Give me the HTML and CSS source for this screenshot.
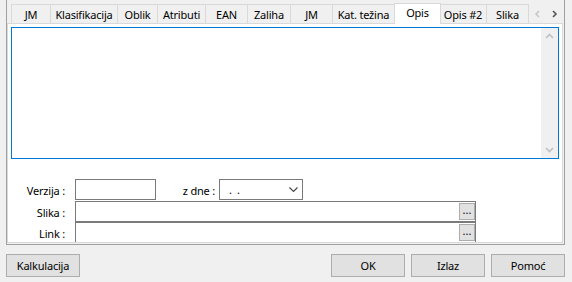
FILE: index.html
```html
<!DOCTYPE html>
<html lang="hr">
<head>
    <meta charset="UTF-8">
    <title>Artikal - Opis</title>
    <link rel="stylesheet" href="styles.css">
</head>
<body>
    <div class="frame">
        <div class="tabbar">
            <div class="tab">JM</div>
            <div class="tab">Klasifikacija</div>
            <div class="tab">Oblik</div>
            <div class="tab">Atributi</div>
            <div class="tab">EAN</div>
            <div class="tab">Zaliha</div>
            <div class="tab">JM</div>
            <div class="tab">Kat. težina</div>
            <div class="tab active">Opis</div>
            <div class="tab">Opis #2</div>
            <div class="tab">Slika</div>
            <svg class="tab-arrows" width="33" height="24" viewBox="0 0 33 24">
                <polyline points="9,11 6,14 9,17" fill="none" stroke="#c6c6c6" stroke-width="1.6"/>
                <polyline points="23,11 26,14 23,17" fill="none" stroke="#555" stroke-width="1.6"/>
            </svg>
        </div>

        <div class="pane">
            <div class="memo">
                <div class="memo-body"></div>
                <div class="vscroll">
                    <svg width="17" height="17" viewBox="0 0 17 17">
                        <polyline points="5,10 8.5,6.5 12,10" fill="none" stroke="#c0c0c0" stroke-width="1.6"/>
                    </svg>
                    <svg width="17" height="17" viewBox="0 0 17 17">
                        <polyline points="5,7 8.5,10.5 12,7" fill="none" stroke="#c0c0c0" stroke-width="1.6"/>
                    </svg>
                </div>
            </div>

            <div class="fields">
                <div class="row">
                    <div class="label">Verzija :</div>
                    <div class="input short"></div>
                    <div class="label label-date">z dne :</div>
                    <div class="combo">
                        <span class="date">.&nbsp;&nbsp;.</span>
                        <svg width="9" height="6" viewBox="0 0 9 6">
                            <polyline points="0.5,0.5 4.5,4.5 8.5,0.5" fill="none" stroke="#444" stroke-width="1.1"/>
                        </svg>
                    </div>
                </div>
                <div class="row row-gap">
                    <div class="label">Slika :</div>
                    <div class="input long">
                        <div class="ellipsis">...</div>
                    </div>
                </div>
                <div class="row">
                    <div class="label">Link :</div>
                    <div class="input long">
                        <div class="ellipsis">...</div>
                    </div>
                </div>
            </div>
        </div>
    </div>

    <div class="buttons">
        <div class="btn">Kalkulacija</div>
        <div class="btn-group">
            <div class="btn">OK</div>
            <div class="btn">Izlaz</div>
            <div class="btn">Pomoć</div>
        </div>
    </div>
</body>
</html>
```

FILE: styles.css
```css
* {
    box-sizing: border-box;
}
body {
    margin: 0;
    width: 572px;
    height: 282px;
    overflow: hidden;
    background-color: #f0f0f0;
    font-family: "Noto Sans", "Segoe UI", sans-serif;
    font-size: 11px;
    letter-spacing: -0.2px;
    color: #000;
}
.frame {
    margin-left: 6px;
    width: 559px;
    height: 245px;
    border: 1px solid #a0a0a0;
    border-top: 0;
    padding: 0 1px 1px 0;
    display: flex;
    flex-direction: column;
}

/* tabs */
.tabbar {
    height: 24px;
    margin-bottom: -1px;
    padding-left: 4px;
    display: flex;
    align-items: flex-end;
}
.tab {
    height: 19px;
    margin-bottom: 1px;
    border-top: 1px solid #d9d9d9;
    border-right: 1px solid #d9d9d9;
    background-color: #f0f0f0;
    text-align: center;
    line-height: 19px;
    white-space: nowrap;
}
.tab:first-child {
    border-left: 1px solid #d9d9d9;
}
.tab:nth-child(1) { width: 40px; }
.tab:nth-child(2) { width: 67px; }
.tab:nth-child(3) { width: 40px; }
.tab:nth-child(4) { width: 48px; }
.tab:nth-child(5) { width: 42px; }
.tab:nth-child(6) { width: 43px; }
.tab:nth-child(7) { width: 42px; }
.tab:nth-child(8) { width: 62px; }
.tab:nth-child(10) { width: 47px; }
.tab:nth-child(11) { width: 42px; }
.tab.active {
    position: relative;
    width: 47px;
    height: 21px;
    margin: 0 -1px 0 -1px;
    border-left: 1px solid #d9d9d9;
    background-color: #fff;
    line-height: 17px;
}
.tab-arrows {
    margin-left: auto;
    align-self: flex-start;
}

/* page */
.pane {
    flex: 1;
    border: 1px solid #d9d9d9;
    background-color: #fff;
    overflow: hidden;
}
.memo {
    height: 132px;
    margin: 3px 3px 0 3px;
    border: 1px solid #0078d7;
    display: flex;
}
.memo-body {
    flex: 1;
}
.vscroll {
    width: 17px;
    background-color: #f0f0f0;
    display: flex;
    flex-direction: column;
    justify-content: space-between;
}
.vscroll svg {
    display: block;
}

.fields {
    margin-top: 20px;
}
.row {
    display: flex;
    align-items: center;
    height: 21px;
}
.row-gap {
    margin-top: 1px;
}
.label {
    width: 57px;
    margin-right: 10px;
    padding-top: 1px;
    text-align: right;
    white-space: nowrap;
}
.label-date {
    width: 59px;
    margin-right: 4px;
}
.input {
    height: 21px;
    border: 1px solid #7a7a7a;
    background-color: #fff;
}
.input.short {
    width: 81px;
}
.input.long {
    width: 401px;
    padding: 1px 0;
    display: flex;
    justify-content: flex-end;
}
.ellipsis {
    width: 16px;
    height: 17px;
    border: 1px solid #adadad;
    background-color: #e1e1e1;
    text-align: center;
    line-height: 12px;
    font-size: 11px;
    letter-spacing: 0;
}
.combo {
    width: 84px;
    height: 21px;
    border: 1px solid #7a7a7a;
    padding: 0 4px 0 9px;
    display: flex;
    align-items: center;
    justify-content: space-between;
}
.date {
    line-height: 19px;
}

/* dialog buttons */
.buttons {
    margin-top: 9px;
    padding: 0 7px 0 6px;
    display: flex;
    justify-content: space-between;
}
.btn-group {
    display: flex;
    gap: 6px;
}
.btn {
    width: 74px;
    height: 23px;
    border: 1px solid #adadad;
    background-color: #e1e1e1;
    text-align: center;
    line-height: 21px;
}
```
